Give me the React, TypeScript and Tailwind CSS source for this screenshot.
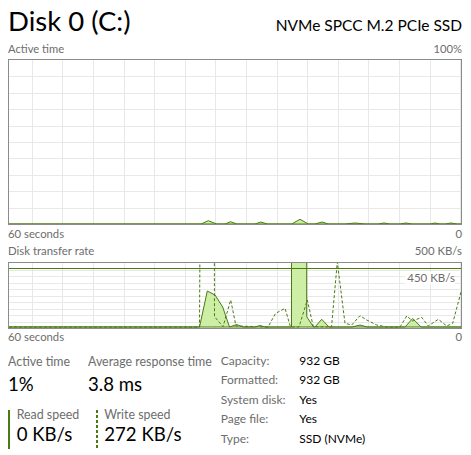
type Pt = [number, number];

// points are page coordinates, shifted into the chart's inner box
const toPath = (pts: Pt[], ox: number, oy: number) =>
  pts.map(([x, y], i) => `${i ? "L" : "M"}${(x - ox).toFixed(1)} ${(y - oy).toFixed(1)}`).join(" ");

const activePts: Pt[] = [
  [9, 224], [201, 224], [208.3, 220.7], [216.7, 224], [225, 224], [230.7, 221.7], [236.7, 224],
  [255, 224], [260.8, 222], [267.3, 224], [291.7, 224], [300, 219.3], [308.3, 224],
  [315, 224], [322, 222], [328.3, 224], [345, 224], [355, 223], [365, 224], [378, 224],
  [384, 223], [390, 224], [400, 224], [406, 223], [412, 224], [430, 224], [435, 223],
  [440, 224], [445, 224], [451, 223], [457, 224], [461, 224],
];

const readPts: Pt[] = [
  [9, 327], [199.5, 327], [207.3, 291], [215, 295], [222.7, 307], [229.5, 327], [236.7, 324.5],
  [243, 327], [255, 327], [260, 325.5], [265, 327], [291.5, 327], [291.5, 250], [306.7, 250],
  [306.7, 316.7], [313.5, 327], [315, 327], [321.7, 319.3], [329, 327], [352, 327], [360, 325],
  [367, 327], [405, 327], [412.7, 318.5], [421, 327], [461, 327],
];

const writePts: Pt[] = [
  [9, 327], [199.5, 327], [200, 240], [214.3, 240], [214.5, 316.7], [223, 326.7], [230.7, 300],
  [236, 326], [268, 327], [275.5, 313.5], [285, 308.3], [290.5, 327], [299, 327], [307.3, 300],
  [313.3, 326.7], [331.5, 327], [337.3, 262], [345, 323.3], [351.7, 325], [360, 315.7],
  [366.7, 320], [376.7, 325], [386.7, 327], [400, 327], [406.7, 316], [412.7, 321],
  [421.7, 317.3], [428.3, 326], [438.3, 319.3], [446.7, 326], [452.7, 323.3], [461, 292],
];

function Grid({ w, h, rows }: { w: number; h: number; rows: number }) {
  const cols: number[] = [];
  for (let x = 22.7; x < w; x += 30.6) cols.push(Math.round(x) + 0.5);
  const lines: number[] = [];
  for (let i = 1; i < rows; i++) lines.push(Math.round((h / rows) * i) + 0.5);
  return (
    <g stroke="#e8e8e8" strokeWidth="1">
      {cols.map((x) => (
        <line key={"c" + x} x1={x} y1={0} x2={x} y2={h} />
      ))}
      {lines.map((y) => (
        <line key={"r" + y} x1={0} y1={y} x2={w} y2={y} />
      ))}
    </g>
  );
}

function ActiveChart() {
  return (
    <div className="mt-[2px] h-[166px] border border-[#8b8b8b]">
      <svg width="452" height="164" className="block">
        <Grid w={452} h={164} rows={10} />
        <path d={toPath(activePts, 9, 60) + " Z"} fill="#ccefa5" stroke="#4b7a12" strokeWidth="1" />
      </svg>
    </div>
  );
}

function TransferChart() {
  return (
    <div className="relative mt-[2px] h-[67px] border border-[#8b8b8b]">
      <svg width="452" height="65" className="block">
        <Grid w={452} h={65} rows={10} />
        <path d={toPath(readPts, 9, 263) + " Z"} fill="#ccefa5" stroke="#4b7a12" strokeWidth="1" />
        <path d={toPath(writePts, 9, 263)} fill="none" stroke="#4b7a12" strokeWidth="1" strokeDasharray="3 2" />
        <line x1="0" y1="5.5" x2="452" y2="5.5" stroke="#4b7a12" strokeWidth="1" />
      </svg>
      <span className="absolute right-[6px] top-[9px] bg-white pl-[2px] text-[11.5px] leading-[12px] text-[#6d6d6d]">
        450 KB/s
      </span>
    </div>
  );
}

export default function App() {
  return (
    <div className="h-[455px] w-[471px] overflow-hidden bg-white pl-2 pr-[9px] text-black [font-family:Lato,'Noto_Sans',sans-serif]">
      <div className="flex h-[41px] items-baseline justify-between">
        <span className="text-[27.5px] leading-[42px]">Disk 0 (C:)</span>
        <span className="text-[15.5px]">NVMe SPCC M.2 PCIe SSD</span>
      </div>
      <div className="flex justify-between text-[11.2px] leading-[16px] text-[#6d6d6d]">
        <span>Active time</span>
        <span>100%</span>
      </div>
      <ActiveChart />
      <div className="flex justify-between text-[11.3px] leading-[17px] text-[#6d6d6d]">
        <span>60 seconds</span>
        <span>0</span>
      </div>
      <div className="flex justify-between text-[11.4px] leading-[18px] text-[#6d6d6d]">
        <span>Disk transfer rate</span>
        <span>500 KB/s</span>
      </div>
      <TransferChart />
      <div className="flex justify-between text-[11.3px] leading-[15px] text-[#6d6d6d]">
        <span>60 seconds</span>
        <span>0</span>
      </div>

      <div className="flex">
        <div className="w-[212.7px]">
          <div className="mt-[9px] flex">
            <div className="w-[80px]">
              <div className="text-[12.4px] leading-[18px] text-[#6d6d6d]">Active time</div>
              <div className="mt-[1px] text-[18.6px] leading-[25px]">1%</div>
            </div>
            <div>
              <div className="text-[12.4px] leading-[18px] text-[#6d6d6d]">Average response time</div>
              <div className="mt-[1px] text-[18.6px] leading-[25px]">3.8 ms</div>
            </div>
          </div>
          <div className="mt-[13px] flex">
            <div className="flex h-[39px] w-[88px]">
              <div className="w-[2px] bg-[#4b7a12]" />
              <div className="pl-[6.7px]">
                <div className="-mt-[2px] text-[12.4px] leading-[14px] text-[#6d6d6d]">Read speed</div>
                <div className="text-[18.6px] leading-[25px]">0 KB/s</div>
              </div>
            </div>
            <div className="flex h-[39px]">
              <div className="w-[2px] bg-[repeating-linear-gradient(to_bottom,#4b7a12_0_3px,transparent_3px_5px)]" />
              <div className="pl-[6.3px]">
                <div className="-mt-[2px] text-[12.4px] leading-[14px] text-[#6d6d6d]">Write speed</div>
                <div className="text-[18.6px] leading-[25px]">272 KB/s</div>
              </div>
            </div>
          </div>
        </div>
        <div className="mt-[8px] grid grid-cols-[78.6px_1fr] text-[12px] leading-[18.33px]">
          <span className="text-[#6d6d6d]">Capacity:</span>
          <span>932 GB</span>
          <span className="text-[#6d6d6d]">Formatted:</span>
          <span>932 GB</span>
          <span className="text-[#6d6d6d]">System disk:</span>
          <span>Yes</span>
          <span className="text-[#6d6d6d]">Page file:</span>
          <span>Yes</span>
          <span className="text-[#6d6d6d]">Type:</span>
          <span>SSD (NVMe)</span>
        </div>
      </div>
    </div>
  );
}
